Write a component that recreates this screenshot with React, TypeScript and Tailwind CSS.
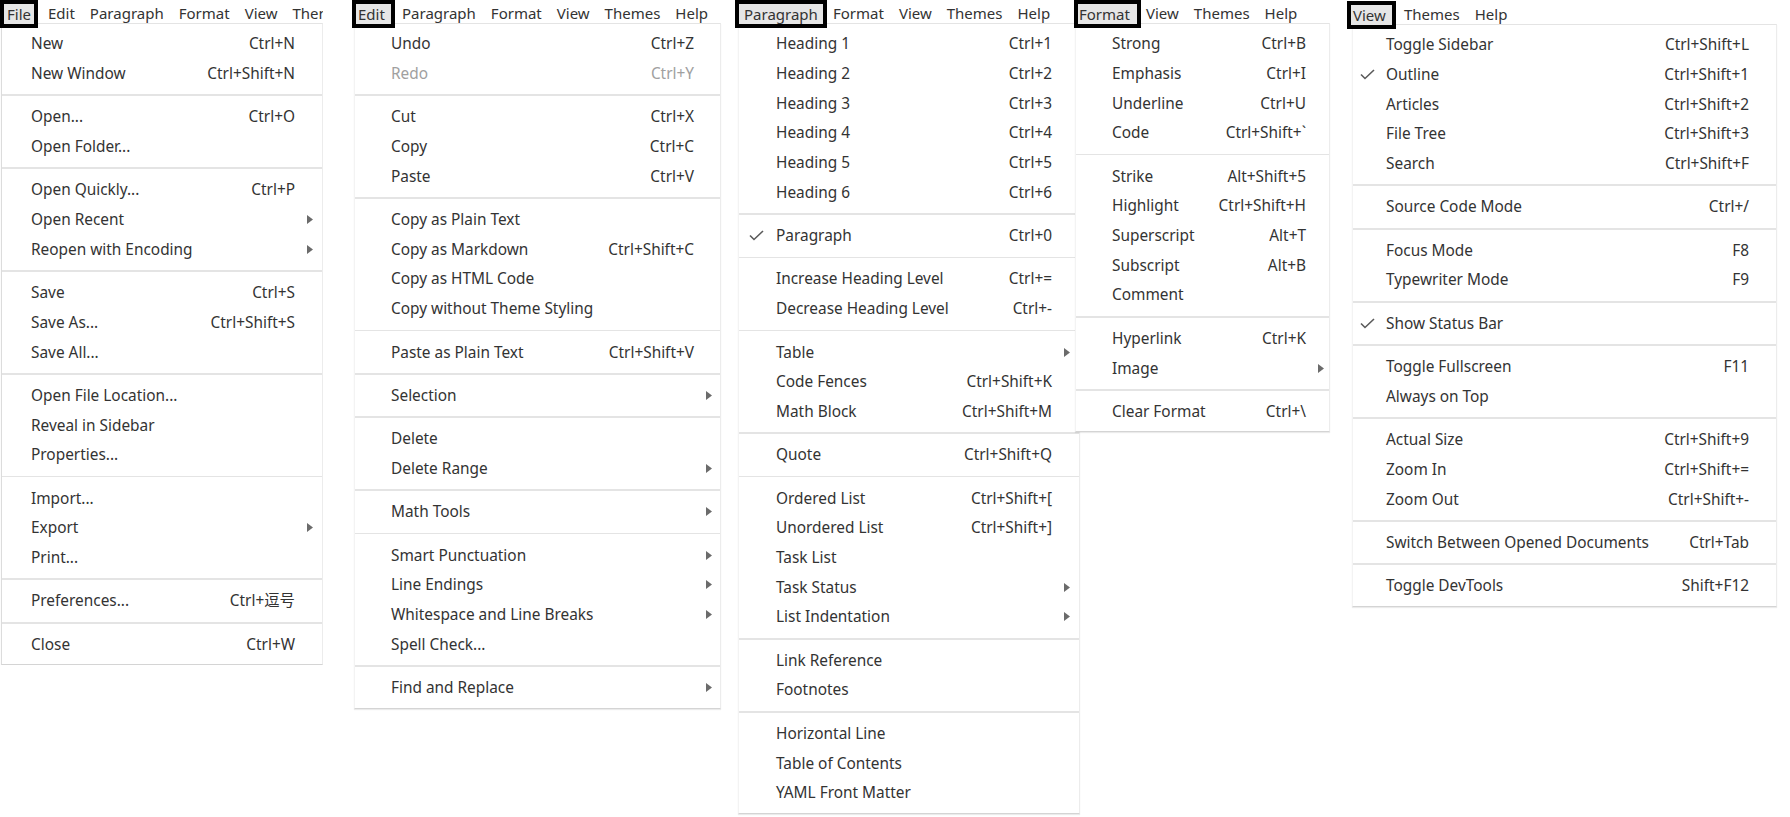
import React from 'react';

type Item = { l: string; k?: string; sub?: boolean; check?: boolean; off?: boolean } | null;

const fileMenu: Item[] = [
  { l: 'New', k: 'Ctrl+N' },
  { l: 'New Window', k: 'Ctrl+Shift+N' },
  null,
  { l: 'Open...', k: 'Ctrl+O' },
  { l: 'Open Folder...' },
  null,
  { l: 'Open Quickly...', k: 'Ctrl+P' },
  { l: 'Open Recent', sub: true },
  { l: 'Reopen with Encoding', sub: true },
  null,
  { l: 'Save', k: 'Ctrl+S' },
  { l: 'Save As...', k: 'Ctrl+Shift+S' },
  { l: 'Save All...' },
  null,
  { l: 'Open File Location...' },
  { l: 'Reveal in Sidebar' },
  { l: 'Properties...' },
  null,
  { l: 'Import...' },
  { l: 'Export', sub: true },
  { l: 'Print...' },
  null,
  { l: 'Preferences...', k: 'Ctrl+逗号' },
  null,
  { l: 'Close', k: 'Ctrl+W' },
];

const editMenu: Item[] = [
  { l: 'Undo', k: 'Ctrl+Z' },
  { l: 'Redo', k: 'Ctrl+Y', off: true },
  null,
  { l: 'Cut', k: 'Ctrl+X' },
  { l: 'Copy', k: 'Ctrl+C' },
  { l: 'Paste', k: 'Ctrl+V' },
  null,
  { l: 'Copy as Plain Text' },
  { l: 'Copy as Markdown', k: 'Ctrl+Shift+C' },
  { l: 'Copy as HTML Code' },
  { l: 'Copy without Theme Styling' },
  null,
  { l: 'Paste as Plain Text', k: 'Ctrl+Shift+V' },
  null,
  { l: 'Selection', sub: true },
  null,
  { l: 'Delete' },
  { l: 'Delete Range', sub: true },
  null,
  { l: 'Math Tools', sub: true },
  null,
  { l: 'Smart Punctuation', sub: true },
  { l: 'Line Endings', sub: true },
  { l: 'Whitespace and Line Breaks', sub: true },
  { l: 'Spell Check...' },
  null,
  { l: 'Find and Replace', sub: true },
];

const paragraphMenu: Item[] = [
  { l: 'Heading 1', k: 'Ctrl+1' },
  { l: 'Heading 2', k: 'Ctrl+2' },
  { l: 'Heading 3', k: 'Ctrl+3' },
  { l: 'Heading 4', k: 'Ctrl+4' },
  { l: 'Heading 5', k: 'Ctrl+5' },
  { l: 'Heading 6', k: 'Ctrl+6' },
  null,
  { l: 'Paragraph', k: 'Ctrl+0', check: true },
  null,
  { l: 'Increase Heading Level', k: 'Ctrl+=' },
  { l: 'Decrease Heading Level', k: 'Ctrl+-' },
  null,
  { l: 'Table', sub: true },
  { l: 'Code Fences', k: 'Ctrl+Shift+K' },
  { l: 'Math Block', k: 'Ctrl+Shift+M' },
  null,
  { l: 'Quote', k: 'Ctrl+Shift+Q' },
  null,
  { l: 'Ordered List', k: 'Ctrl+Shift+[' },
  { l: 'Unordered List', k: 'Ctrl+Shift+]' },
  { l: 'Task List' },
  { l: 'Task Status', sub: true },
  { l: 'List Indentation', sub: true },
  null,
  { l: 'Link Reference' },
  { l: 'Footnotes' },
  null,
  { l: 'Horizontal Line' },
  { l: 'Table of Contents' },
  { l: 'YAML Front Matter' },
];

const formatMenu: Item[] = [
  { l: 'Strong', k: 'Ctrl+B' },
  { l: 'Emphasis', k: 'Ctrl+I' },
  { l: 'Underline', k: 'Ctrl+U' },
  { l: 'Code', k: 'Ctrl+Shift+`' },
  null,
  { l: 'Strike', k: 'Alt+Shift+5' },
  { l: 'Highlight', k: 'Ctrl+Shift+H' },
  { l: 'Superscript', k: 'Alt+T' },
  { l: 'Subscript', k: 'Alt+B' },
  { l: 'Comment' },
  null,
  { l: 'Hyperlink', k: 'Ctrl+K' },
  { l: 'Image', sub: true },
  null,
  { l: 'Clear Format', k: 'Ctrl+\\' },
];

const viewMenu: Item[] = [
  { l: 'Toggle Sidebar', k: 'Ctrl+Shift+L' },
  { l: 'Outline', k: 'Ctrl+Shift+1', check: true },
  { l: 'Articles', k: 'Ctrl+Shift+2' },
  { l: 'File Tree', k: 'Ctrl+Shift+3' },
  { l: 'Search', k: 'Ctrl+Shift+F' },
  null,
  { l: 'Source Code Mode', k: 'Ctrl+/' },
  null,
  { l: 'Focus Mode', k: 'F8' },
  { l: 'Typewriter Mode', k: 'F9' },
  null,
  { l: 'Show Status Bar', check: true },
  null,
  { l: 'Toggle Fullscreen', k: 'F11' },
  { l: 'Always on Top' },
  null,
  { l: 'Actual Size', k: 'Ctrl+Shift+9' },
  { l: 'Zoom In', k: 'Ctrl+Shift+=' },
  { l: 'Zoom Out', k: 'Ctrl+Shift+-' },
  null,
  { l: 'Switch Between Opened Documents', k: 'Ctrl+Tab' },
  null,
  { l: 'Toggle DevTools', k: 'Shift+F12' },
];

type Panel = {
  bar: string[];
  wrap: string;
  box: string;
  rest: string;
  drop: string;
  lead: string;
  pr: string;
  items: Item[];
};

const panels: Panel[] = [
  {
    bar: ['File', 'Edit', 'Paragraph', 'Format', 'View', 'Themes'],
    wrap: 'w-[323px] overflow-hidden',
    box: 'w-[38px] pl-[3px]',
    rest: 'ml-[10px]',
    drop: 'ml-[1px] w-[322px] border-l-[#dcdcdc]',
    lead: 'w-[29px] pl-[8px]',
    pr: 'pr-[27px]',
    items: fileMenu,
  },
  {
    bar: ['Edit', 'Paragraph', 'Format', 'View', 'Themes', 'Help'],
    wrap: 'ml-[29px] w-[369px]',
    box: 'w-[43px] pl-[2px]',
    rest: 'ml-[7px]',
    drop: 'ml-[2px] w-[367px] border-l-[#f3f3f3]',
    lead: 'w-[36px] pl-[8px]',
    pr: 'pr-[26px]',
    items: editMenu,
  },
  {
    bar: ['Paragraph', 'Format', 'View', 'Themes', 'Help'],
    wrap: 'ml-[14px] w-[345px]',
    box: 'w-[92px] pl-[5px]',
    rest: 'ml-[6px]',
    drop: 'ml-[3px] w-[342px] border-l-[#f3f3f3]',
    lead: 'w-[37px] pl-[10px]',
    pr: 'pr-[27px]',
    items: paragraphMenu,
  },
  {
    bar: ['Format', 'View', 'Themes', 'Help'],
    wrap: 'relative z-20 -ml-[6px] w-[256px]',
    box: 'w-[67px] pl-[1px]',
    rest: 'ml-[5px]',
    drop: 'ml-[1px] w-[255px] border-l-[#f3f3f3]',
    lead: 'w-[36px] pl-[8px]',
    pr: 'pr-[23px]',
    items: formatMenu,
  },
  {
    bar: ['View', 'Themes', 'Help'],
    wrap: 'ml-[17px] w-[430px] pt-[1px]',
    box: 'w-[49px] pl-[2px]',
    rest: 'ml-[8px]',
    drop: 'ml-[5px] w-[425px] border-l-[#f3f3f3]',
    lead: 'w-[33px] pl-[7px]',
    pr: 'pr-[27px]',
    items: viewMenu,
  },
];

function Check() {
  return (
    <svg width="15" height="11" viewBox="0 0 15 11" fill="none">
      <path d="M1 5.5 L5 9.5 L14 1" stroke="#5a5a5a" strokeWidth="1.6" />
    </svg>
  );
}

function Arrow() {
  return (
    <svg width="6" height="9" viewBox="0 0 6 9" className="-mr-[18px]">
      <polygon points="0,0 6,4.5 0,9" fill="#6b6b6b" />
    </svg>
  );
}

function MenuPanel({ p }: { p: Panel }) {
  return (
    <div className={`shrink-0 ${p.wrap}`}>
      <div className="flex h-[23px] items-start whitespace-nowrap text-[15px] text-[#333]">
        <span className={`relative z-10 h-[28px] shrink-0 border-4 border-black ${p.box} bg-[#e6e6e6]`}>
          <span className="block h-[20px] leading-[20px]">{p.bar[0]}</span>
        </span>
        <div className={`mt-[3px] flex gap-[15px] leading-[21px] ${p.rest}`}>
          {p.bar.slice(1).map((b) => (
            <span key={b}>{b}</span>
          ))}
        </div>
      </div>
      <div
        className={`${p.drop} border border-t-[#e4e4e4] border-r-[#ececec] border-b-[#d4d4d4] bg-white pt-[5px] pb-[5px] shadow-[0_1px_1px_rgba(0,0,0,0.08)]`}
      >
        {p.items.map((it, i) =>
          it === null ? (
            <div key={i} className="my-[6px] h-[1.7px] bg-[#e4e4e4]" />
          ) : (
            <div
              key={i}
              className={`flex h-[29.7px] items-center whitespace-nowrap text-[15.4px] ${p.pr} ${
                it.off ? 'text-[#a0a0a0]' : 'text-[#333]'
              }`}
            >
              <div className={`flex shrink-0 items-center ${p.lead}`}>{it.check && <Check />}</div>
              <span className="flex-1">{it.l}</span>
              {it.k && <span>{it.k}</span>}
              {it.sub && <Arrow />}
            </div>
          )
        )}
      </div>
    </div>
  );
}

export default function App() {
  return (
    <div className="flex h-[817px] w-[1790px] items-start overflow-hidden bg-white font-['Noto_Sans','Noto_Sans_CJK_SC',sans-serif]">
      {panels.map((p, i) => (
        <MenuPanel key={i} p={p} />
      ))}
    </div>
  );
}
